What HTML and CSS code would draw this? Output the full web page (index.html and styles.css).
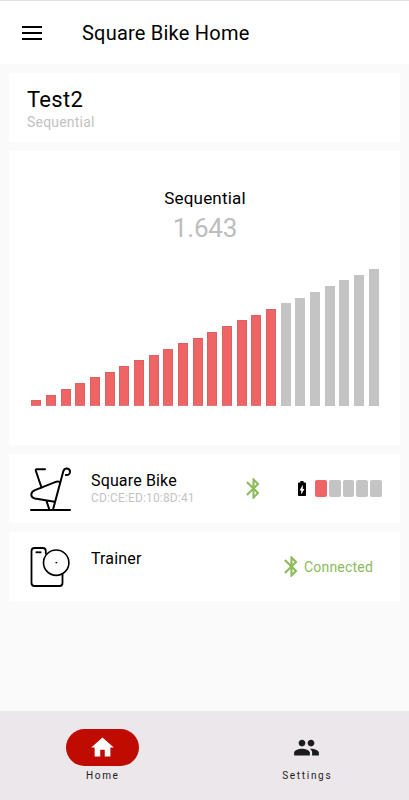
FILE: index.html
```html
<!DOCTYPE html>
<html lang="en">
<head>
<meta charset="utf-8">
<title>Square Bike Home</title>
<link rel="stylesheet" href="styles.css">
</head>
<body>
<div class="app">
  <header class="topbar">
    <svg class="menu" viewBox="0 0 20 14"><path d="M0 1h20M0 7h20M0 13h20" stroke="#000" stroke-width="2"/></svg>
    <h1 class="title">Square Bike Home</h1>
  </header>
  <main class="content">
    <section class="card profile">
      <h2 class="profile-name">Test2</h2>
      <p class="profile-mode">Sequential</p>
    </section>
    <section class="card gear">
      <h3 class="gear-mode">Sequential</h3>
      <p class="gear-ratio">1.643</p>
      <div class="chart" id="chart"></div>
    </section>
    <section class="card device">
      <svg class="device-icon" viewBox="0 0 42 44" fill="none" stroke="#000" stroke-width="2" stroke-linecap="round" stroke-linejoin="round">
        <path d="M15 2.300H6.800Q5.400 2.300 5.800 3.800L11.500 20.500M23.300 41.500L33.300 4.200Q34.500 1.300 37 1.500Q40.300 1.900 40 5.200Q39.500 8.500 35.800 7.900"/>
        <path d="M29.600 14.900Q27.500 14 24.500 15.400L5 23.100Q1.300 24.600 1.300 27.500Q1.300 30.600 5 31.400L24.500 34.800M16.500 34L19 41.500"/>
        <path d="M1 43H40"/>
      </svg>
      <div class="device-text">
        <h3 class="device-name">Square Bike</h3>
        <p class="device-id">CD:CE:ED:10:8D:41</p>
      </div>
      <svg class="bluetooth bike-link" viewBox="5 2 14 20"><path d="M17.710 7.710L12 2h-1v7.590L6.410 5 5 6.410 10.590 12 5 17.590 6.410 19 11 14.410V22h1l5.710-5.710-4.300-4.290 4.300-4.290zM13 5.830l1.880 1.880L13 9.590V5.830zm1.880 10.460L13 18.170v-3.760l1.880 1.880z"/></svg>
      <svg class="battery" viewBox="7 2 10 20" preserveAspectRatio="none"><path d="M15.670 4H14V2h-4v2H8.330C7.600 4 7 4.600 7 5.330v15.330C7 21.400 7.600 22 8.330 22h7.330c.740 0 1.340-.600 1.340-1.330V5.330C17 4.600 16.400 4 15.670 4zM11 20v-5.500H9L13 7v5.500h2L11 20z"/></svg>
      <div class="level"><i class="cell on"></i><i class="cell"></i><i class="cell"></i><i class="cell"></i><i class="cell"></i></div>
    </section>
    <section class="card device">
      <svg class="device-icon" viewBox="0 0 42 44" fill="none" stroke="#000" stroke-width="1.800" stroke-linecap="round" stroke-linejoin="round">
        <path d="M15.800 8.500V6Q15.800 3 12.800 3H4.500Q1.500 3 1.500 6V38Q1.500 41 4.500 41H29.500Q32.500 41 32.500 38V29"/>
        <circle cx="26.200" cy="17.700" r="12.700" stroke-width="1.600"/>
        <path d="M6.500 7.300H10.500" stroke-linecap="square"/>
        <circle cx="26.200" cy="17.700" r=".5" stroke-width=".8"/>
      </svg>
      <div class="device-text">
        <h3 class="device-name">Trainer</h3>
      </div>
      <svg class="bluetooth trainer-link" viewBox="5 2 14 20"><path d="M17.710 7.710L12 2h-1v7.590L6.410 5 5 6.410 10.590 12 5 17.590 6.410 19 11 14.410V22h1l5.710-5.710-4.300-4.290 4.300-4.290zM13 5.830l1.880 1.880L13 9.590V5.830zm1.880 10.460L13 18.170v-3.760l1.880 1.880z"/></svg>
      <span class="status">Connected</span>
    </section>
  </main>
  <nav class="tabs">
    <a class="tab active">
      <span class="pill"><svg viewBox="0 0 24 24"><path d="M10 20v-6h4v6h5v-8h3L12 3 2 12h3v8z"/></svg></span>
      <span class="tab-label">Home</span>
    </a>
    <a class="tab">
      <span class="pill"><svg viewBox="0 0 24 24"><path d="M16 11c1.660 0 2.990-1.340 2.990-3S17.660 5 16 5s-3 1.340-3 3 1.340 3 3 3zm-8 0c1.660 0 2.990-1.340 2.990-3S9.660 5 8 5 5 6.340 5 8s1.340 3 3 3zm0 2c-2.330 0-7 1.170-7 3.500V19h14v-2.500c0-2.330-4.670-3.500-7-3.500zm8 0c-.290 0-.620.020-.970.050 1.160.840 1.970 1.970 1.970 3.450V19h6v-2.500c0-2.330-4.670-3.500-7-3.500z"/></svg></span>
      <span class="tab-label">Settings</span>
    </a>
  </nav>
</div>
<script src="chart.js"></script>
</body>
</html>
```
FILE: styles.css
```css
* { box-sizing: border-box; margin: 0; padding: 0; }
body { font-family: Roboto, "Liberation Sans", sans-serif; color: #000; }
h1, h2, h3 { font-weight: 400; }
svg { display: block; flex: none; }
.app { height: 800px; display: flex; flex-direction: column; background: #fafafa; overflow: hidden; }
.topbar { height: 64px; flex: none; display: flex; align-items: center; padding-left: 22px; border-top: 1px solid #e2e2e2; background: #fff; }
.menu { width: 20px; height: 14px; }
.title { margin-left: 40px; font-size: 20px; line-height: 24px; letter-spacing: .22px; padding-top: 1px; }
.content { flex: 1; display: flex; flex-direction: column; gap: 9px; padding: 9px 9px 0; }
.card { background: #fff; }
.profile { height: 69px; padding: 13px 18px 0; }
.profile-name { font-size: 22px; line-height: 28px; letter-spacing: .3px; }
.profile-mode { font-size: 14px; line-height: 16px; letter-spacing: .2px; color: #c2c2c2; }
.gear { height: 294px; padding: 37px 21px 39px 22px; display: flex; flex-direction: column; align-items: center; }
.gear-mode { font-size: 17px; line-height: 20px; letter-spacing: .2px; }
.gear-ratio { margin-top: 5px; font-size: 26px; line-height: 30px; letter-spacing: -.2px; color: #bdbdbd; }
.chart { width: 347.500px; height: 137px; margin-top: auto; display: flex; align-items: flex-end; justify-content: space-between; }
.bar { width: 10px; background: #c4c4c4; }
.bar.on { background: #ef6464; border: 1px solid #d96262; border-bottom-color: #e47777; }
.device { height: 69px; padding: 13px 18px 0 21px; display: flex; align-items: flex-start; }
.device-icon { width: 42px; height: 44px; }
.device-text { width: 155px; margin-left: 19px; padding-top: 4px; white-space: nowrap; }
.device-name { font-size: 16px; line-height: 20px; letter-spacing: .15px; }
.device-id { font-size: 12px; line-height: 14px; letter-spacing: .15px; color: #c4c4c4; }
.bluetooth { width: 15px; height: 21px; fill: #8bbb5b; }
.bike-link { margin-top: 11px; }
.battery { width: 8px; height: 15px; margin: 14px 0 0 37px; }
.level { display: flex; gap: 2px; margin: 13px 0 0 9px; }
.cell { width: 11.800px; height: 17px; border-radius: 2px; background: #c4c4c4; }
.cell.on { background: #ef6464; }
.trainer-link { margin: 11px 0 0 38px; }
.status { margin: 12px 0 0 5px; font-size: 14px; line-height: 20px; letter-spacing: .2px; color: #8bbb5b; }
.tabs { height: 89px; flex: none; display: flex; background: #ece7ea; }
.tab { flex: 1; display: flex; flex-direction: column; align-items: center; padding-top: 18px; }
.pill { width: 73px; height: 37px; border-radius: 18.500px; display: flex; align-items: center; justify-content: center; }
.pill svg { width: 27px; height: 27px; fill: #1c1b1e; }
.active .pill { background: #c00b00; }
.active .pill svg { fill: #fff; }
.tab-label { margin-top: 3px; padding-left: 1px; font-size: 10px; line-height: 14px; letter-spacing: 1.700px; color: #1c1b1e; }
```
FILE: chart.js
```js
const chart = document.getElementById('chart');
const total = 24;
const current = 17;
for (let i = 1; i <= total; i++) {
  const bar = document.createElement('div');
  bar.className = i <= current ? 'bar on' : 'bar';
  bar.style.height = (i / total * 100) + '%';
  chart.appendChild(bar);
}
```
